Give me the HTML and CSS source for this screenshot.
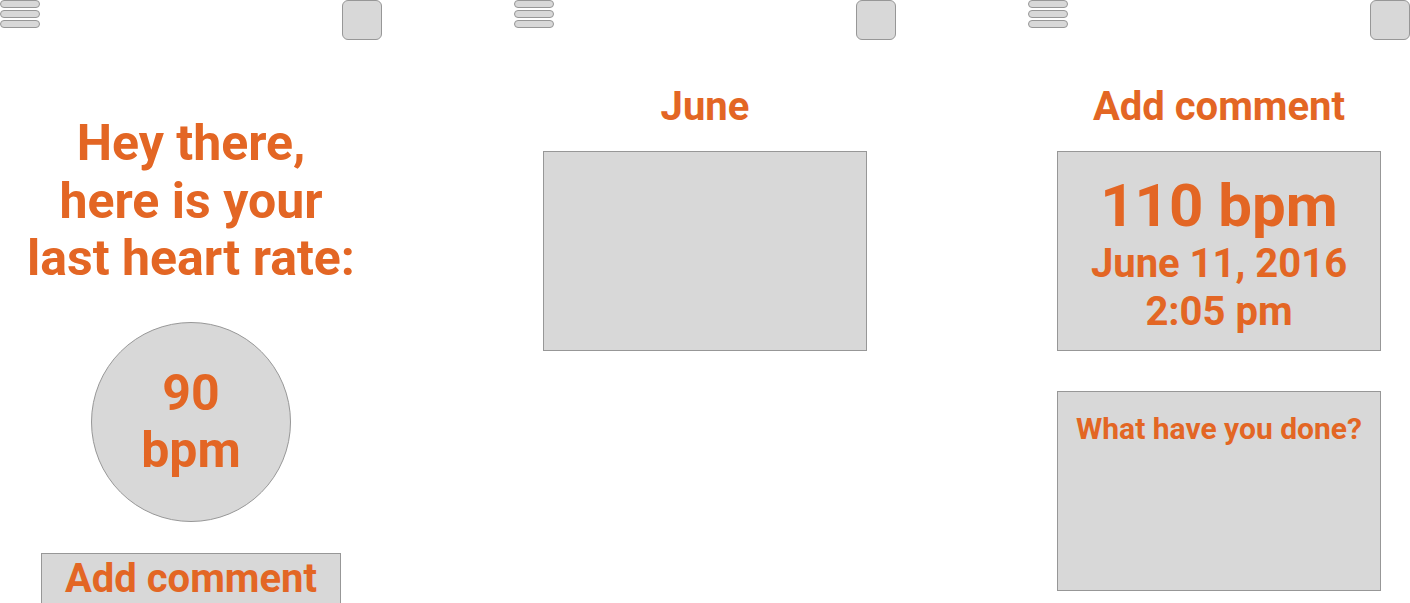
FILE: index.html
```html
<!DOCTYPE html>
<html lang="en">
<head>
    <meta charset="UTF-8">
    <meta name="viewport" content="width=device-width, initial-scale=1.0">
    <title>Heart rate</title>
    <link rel="stylesheet" href="styles.css">
</head>
<body>
    <div class="screens">
        <!-- Home -->
        <section class="screen">
            <div class="topbar">
                <div class="menu"><span></span><span></span><span></span></div>
                <div class="square"></div>
            </div>
            <h1 class="greeting">Hey there,<br>here is your<br>last heart rate:</h1>
            <div class="circle">90<br>bpm</div>
            <button class="add-btn">Add comment</button>
        </section>

        <!-- Month -->
        <section class="screen">
            <div class="topbar">
                <div class="menu"><span></span><span></span><span></span></div>
                <div class="square"></div>
            </div>
            <h2 class="title">June</h2>
            <div class="box"></div>
        </section>

        <!-- Comment -->
        <section class="screen">
            <div class="topbar">
                <div class="menu"><span></span><span></span><span></span></div>
                <div class="square"></div>
            </div>
            <h2 class="title">Add comment</h2>
            <div class="box reading">
                <div class="bpm">110 bpm</div>
                <div>June 11, 2016</div>
                <div>2:05 pm</div>
            </div>
            <div class="box note">What have you done?</div>
        </section>
    </div>
</body>
</html>
```

FILE: styles.css
```css
body {
    margin: 0;
    font-family: Roboto, "Liberation Sans", sans-serif;
    font-weight: bold;
    color: #e36624;
    background-color: #fff;
}
.screens {
    display: flex;
    gap: 132px;
}
.screen {
    width: 382px;
    display: flex;
    flex-direction: column;
    align-items: center;
    text-align: center;
}
.topbar {
    width: 100%;
    height: 40px;
    display: flex;
    justify-content: space-between;
    align-items: flex-start;
}
.menu {
    display: flex;
    flex-direction: column;
    gap: 2px;
}
.menu span {
    display: block;
    width: 40px;
    height: 8px;
    box-sizing: border-box;
    background-color: #d8d8d8;
    border: 1px solid #979797;
    border-radius: 4px;
}
.square {
    width: 40px;
    height: 40px;
    box-sizing: border-box;
    background-color: #d8d8d8;
    border: 1px solid #979797;
    border-radius: 6px;
}
.greeting {
    margin: 75px 0 0;
    font-size: 50px;
    line-height: 57.6px;
}
.circle {
    margin-top: 34px;
    width: 200px;
    height: 200px;
    box-sizing: border-box;
    border-radius: 50%;
    background-color: #d8d8d8;
    border: 1px solid #979797;
    display: flex;
    align-items: center;
    justify-content: center;
    font-size: 50px;
    line-height: 57px;
}
.add-btn {
    margin-top: 31px;
    width: 300px;
    height: 60px;
    box-sizing: border-box;
    padding: 1px 0 0;
    background-color: #d8d8d8;
    border: 1px solid #979797;
    color: #e36624;
    font-family: inherit;
    font-weight: bold;
    font-size: 40px;
    line-height: 48px;
    display: flex;
    justify-content: center;
    align-items: flex-start;
}
.title {
    margin: 43px 0 0;
    font-size: 40px;
    line-height: 48px;
}
.box {
    margin-top: 20px;
    width: 324px;
    height: 200px;
    box-sizing: border-box;
    background-color: #d8d8d8;
    border: 1px solid #979797;
}
.reading {
    padding-top: 20px;
    font-size: 40px;
    line-height: 48px;
}
.reading .bpm {
    font-size: 60px;
    line-height: 68px;
}
.note {
    margin-top: 40px;
    padding-top: 19px;
    font-size: 30px;
    line-height: 36px;
}
```
